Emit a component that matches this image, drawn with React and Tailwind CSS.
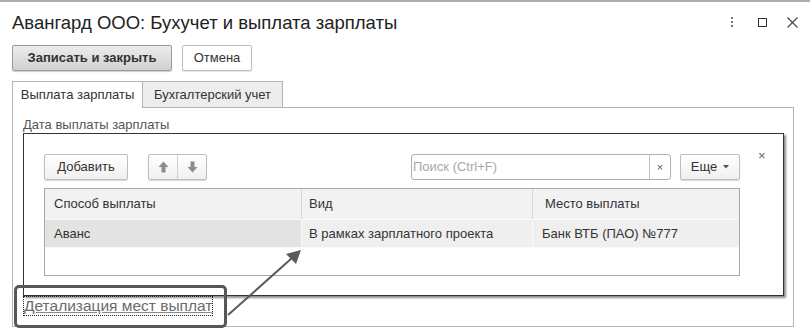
import React from "react";

function ArrowIcon({ down }) {
  return (
    <svg width="11" height="12" viewBox="0 0 11 12" className={down ? "rotate-180" : ""}>
      <path d="M5.5 0.5 L10.5 6 L7.5 6 L7.5 11.5 L3.5 11.5 L3.5 6 L0.5 6 Z" fill="#8c8c8c" />
    </svg>
  );
}

export default function App() {
  return (
    <div className="w-[810px] h-[331px] bg-white border-t-2 border-[#adadad] relative overflow-hidden text-[#333] font-['Liberation_Sans',Arial,sans-serif]">
      {/* header */}
      <div className="flex items-start h-[43px]">
        <div className="ml-3 mt-[10px] text-[18.5px] leading-[22px] text-[#222]">
          Авангард ООО: Бухучет и выплата зарплаты
        </div>
        <div className="ml-auto mr-3 mt-[14px] flex items-center h-[12px]">
          <div className="flex flex-col gap-[2px] w-[2px]">
            <div className="w-[2px] h-[2px] bg-[#777]" />
            <div className="w-[2px] h-[2px] bg-[#777]" />
            <div className="w-[2px] h-[2px] bg-[#777]" />
          </div>
          <div className="ml-[25px] w-[9px] h-[9px] border-[1.5px] border-[#333]" />
          <svg className="ml-[20px]" width="11" height="11" viewBox="0 0 11 11">
            <path d="M0.5 0.5 L10.5 10.5 M10.5 0.5 L0.5 10.5" stroke="#444" strokeWidth="1.1" />
          </svg>
        </div>
      </div>

      {/* buttons */}
      <div className="flex gap-[10px] ml-3 h-[26px]">
        <div className="w-[160px] h-[26px] flex items-center justify-center rounded-[2px] border border-[#9c9c9c] bg-gradient-to-b from-[#ececec] to-[#d2d2d2] shadow-[0_1px_1px_rgba(0,0,0,0.2)] text-[13px] font-bold text-[#333]">
          Записать и закрыть
        </div>
        <div className="w-[70px] h-[26px] flex items-center justify-center rounded-[2px] border border-[#bdbdbd] bg-white shadow-[0_1px_1px_rgba(0,0,0,0.12)] text-[13px] text-[#333]">
          Отмена
        </div>
      </div>

      {/* tabs */}
      <div className="flex ml-3 mr-4 mt-[10px] h-[27px]">
        <div className="w-[131px] h-[27px] border-l border-t border-r border-[#b4b4b4] bg-white flex items-center justify-center text-[13px] text-[#333]">
          Выплата зарплаты
        </div>
        <div className="w-[140px] h-[27px] border-t border-r border-b border-[#b4b4b4] bg-[#ededed] flex items-center justify-center text-[13px] text-[#333]">
          Бухгалтерский учет
        </div>
        <div className="flex-1 border-b border-[#b4b4b4]" />
      </div>

      {/* tab content */}
      <div className="ml-3 mr-4 h-[219px] border-l border-r border-b border-[#b4b4b4] flex flex-col">
        <div className="pl-[10px] pt-[9px] text-[13px] leading-[16px] text-[#555]">
          Дата выплаты зарплаты
        </div>

        {/* popup */}
        <div className="ml-[10px] w-[761px] h-[163px] border border-[#333] bg-white shadow-[2px_2px_2px_rgba(0,0,0,0.45)] flex">
          <div className="pl-[20px] pt-[20px] flex flex-col">
            <div className="flex w-[696px] h-[26px] items-center">
              <div className="w-[84px] h-[26px] flex items-center justify-center rounded-[2px] border border-[#bdbdbd] bg-gradient-to-b from-white to-[#f0f0f0] shadow-[0_1px_1px_rgba(0,0,0,0.15)] text-[13px] text-[#333]">
                Добавить
              </div>
              <div className="ml-[20px] w-[59px] h-[26px] flex rounded-[2px] border border-[#bdbdbd] bg-gradient-to-b from-white to-[#f0f0f0] shadow-[0_1px_1px_rgba(0,0,0,0.15)]">
                <div className="flex-1 flex items-center justify-center border-r border-[#cfcfcf]">
                  <ArrowIcon />
                </div>
                <div className="flex-1 flex items-center justify-center">
                  <ArrowIcon down />
                </div>
              </div>
              <div className="ml-auto w-[260px] h-[26px] flex rounded-[3px] border border-[#b0b0b0] bg-white">
                <div className="flex-1 flex items-center pl-[1px] text-[13px] text-[#a8a8a8]">
                  Поиск (Ctrl+F)
                </div>
                <div className="w-[21px] border-l border-[#c4c4c4] flex items-center justify-center text-[11px] text-[#555]">
                  ×
                </div>
              </div>
              <div className="ml-[9px] w-[60px] h-[26px] flex items-center justify-center gap-[6px] rounded-[2px] border border-[#bdbdbd] bg-gradient-to-b from-white to-[#f0f0f0] shadow-[0_1px_1px_rgba(0,0,0,0.15)] text-[13px] text-[#333]">
                <span>Еще</span>
                <svg width="6" height="4" viewBox="0 0 6 4">
                  <path d="M0 0 L6 0 L3 3.5 Z" fill="#555" />
                </svg>
              </div>
            </div>

            {/* table */}
            <div className="mt-[8px] w-[696px] h-[88px] border border-[#a9a9a9] bg-white text-[13px] text-[#333]">
              <div className="grid grid-cols-[257px_231px_1fr] h-[31px] bg-[#f2f2f2] border-b border-[#fafafa]">
                <div className="flex items-center pl-[9px] border-r border-[#d6d6d6]">Способ выплаты</div>
                <div className="flex items-center pl-[7px] border-r border-[#d6d6d6]">Вид</div>
                <div className="flex items-center pl-[12px]">Место выплаты</div>
              </div>
              <div className="grid grid-cols-[257px_231px_1fr] h-[28px] bg-[#efefef] border-b border-[#fafafa]">
                <div className="flex items-center pl-[9px] bg-[#e3e3e3] border-r border-[#fafafa]">Аванс</div>
                <div className="flex items-center pl-[7px] border-r border-[#fafafa]">В рамках зарплатного проекта</div>
                <div className="flex items-center pl-[9px]">Банк ВТБ (ПАО) №777</div>
              </div>
            </div>
          </div>
          <div className="ml-[18px] mt-[16px] text-[13px] leading-[12px] text-[#666] h-[12px]">×</div>
        </div>

        <div className="ml-[11px] mt-[1px] self-start text-[15.5px] leading-[18px] text-[#6b6b6b] underline decoration-[#8a8a8a] outline outline-1 outline-dotted outline-[#222]">
          Детализация мест выплат
        </div>
      </div>

      {/* annotation */}
      <div className="absolute left-[14px] top-[283px] w-[213px] h-[43px] border-[3px] border-[#575757] rounded-[5px]" />
      <svg className="absolute left-0 top-0" width="810" height="331" viewBox="0 0 810 331">
        <line x1="228" y1="313" x2="292" y2="256" stroke="#5a5a5a" strokeWidth="2" />
        <path d="M301 248 L286 252 L296 262 Z" fill="#5a5a5a" />
      </svg>
    </div>
  );
}
